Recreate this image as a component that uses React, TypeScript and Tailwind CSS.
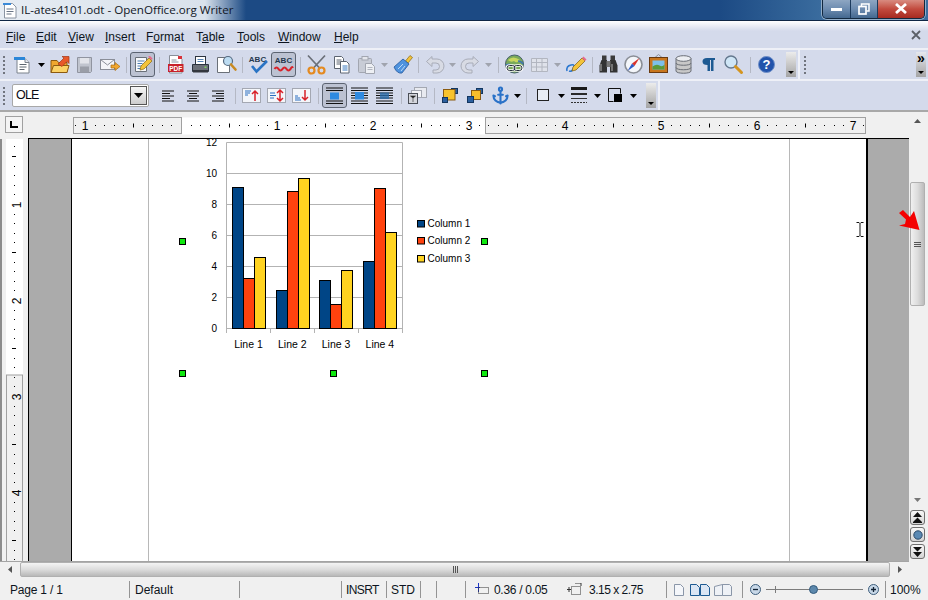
import React from "react";
import { Anchor } from "lucide-react";

const I = ({ children }: { children: React.ReactNode }) => (
  <svg width="25" height="25" viewBox="0 0 25 25" className="shrink-0 block">{children}</svg>
);
const Arrow = ({ w, dim }: { w: string; dim?: boolean }) => (
  <div className={`${w} flex justify-center shrink-0`}>
    <svg width="7" height="4" viewBox="0 0 7 4"><path d="M0 0h7L3.500 4z" fill={dim ? "#a0a4ae" : "#000"} /></svg>
  </div>
);
const Sep = ({ w }: { w: string }) => (
  <div className={`${w} flex justify-center shrink-0`}><div className="w-px h-[16px] bg-[#b4b8c4]" /></div>
);
const Pressed = ({ children }: { children: React.ReactNode }) => (
  <div className="w-[25px] h-[25px] shrink-0 rounded-[3px] border border-[#5c6472] bg-[#bcc2d2] flex items-center justify-center"><div className="-m-px">{children}</div></div>
);
const Grip = () => (
  <div className="flex flex-col gap-[2px] w-[2px] ml-[4px] shrink-0">
    {[0, 1, 2, 3, 4].map((i) => <div key={i} className="w-[2px] h-[2px] bg-[#70747e]" />)}
  </div>
);
const Overflow = () => (
  <div className="w-[10px] h-[25px] shrink-0 bg-gradient-to-b from-[#ececec] to-[#a4a4a4] flex items-end justify-center pb-[3px]">
    <svg width="6" height="3" viewBox="0 0 6 3"><path d="M0 0h6L3 3z" fill="#000" /></svg>
  </div>
);

const NewDoc = () => <I><path d="M7 6.500h8l4 4v10.500H7z" fill="#fff" stroke="#7b828c" /><path d="M15 6.500v4h4" fill="#e4e8ee" stroke="#7b828c" /><path d="M9.500 12.500h7M9.500 15h7M9.500 17.500h5" stroke="#5d6670" /><rect x="4" y="5" width="11" height="3" fill="#2b86d8" /></I>;
const Open = () => <I><path d="M4 8.500h6l1.500 2H20v10H4z" fill="#f0a72e" stroke="#8c5a10" /><path d="M4 20.500l2.500-7H22l-2 7z" fill="#fbd266" stroke="#8c5a10" /><path d="M11 12l6-6-2-1.500h7v7l-2-2-5 5z" fill="#e8582a" stroke="#a33412" strokeWidth=".7" /></I>;
const Save = () => <I><path d="M5.500 5.500h14v14l-1 1h-13z" fill="#c0c4ce" stroke="#9094a0" /><rect x="8" y="6" width="9" height="5.500" fill="#e2e4ea" /><rect x="8" y="14.500" width="9" height="6" fill="#9a9ea8" /></I>;
const Mail = () => <I><rect x="3.500" y="7.500" width="14" height="10" fill="#f4f5f8" stroke="#8a8e98" /><path d="M3.500 7.500l7 5.500 7-5.500" fill="none" stroke="#8a8e98" /><path d="M14 13h4v-2.500l5 4-5 4V16h-4z" fill="#f2a72e" stroke="#a86c10" strokeWidth=".7" /></I>;
const Edit = () => <I><path d="M5.500 5.500h11v14h-11z" fill="#f8f9fb" stroke="#6a7078" /><path d="M7.500 9h7M7.500 11.500h5M7.500 14h4M7.500 16.500h4" stroke="#4c7cb0" /><path d="M10 18l1-4 8-8 3 3-8 8z" fill="#f3c33b" stroke="#8c6a10" strokeWidth=".7" /><path d="M18 4.500l3.500 3.500 1-1.500-2.500-2.500z" fill="#e8688a" /></I>;
const Pdf = () => <I><path d="M6.500 3.500h9l3.500 3.500v14H6.500z" fill="#fff" stroke="#888e98" /><path d="M8.500 8h5M8.500 10h7" stroke="#8a94a0" /><rect x="15" y="4" width="4" height="3" fill="#d8333a" /><rect x="5" y="12" width="15.500" height="8" fill="#c8222a" /><text x="12.700" y="18.700" textAnchor="middle" fontSize="6.500" fontWeight="700" fill="#fff" fontFamily="Liberation Sans">PDF</text></I>;
const Print = () => <I><rect x="7.500" y="4.500" width="10" height="8" fill="#fff" stroke="#2c3440" /><path d="M9.500 7.500h6M9.500 9.500h6" stroke="#5684b4" /><path d="M4.500 12.500h16v7h-16z" fill="#6c7078" stroke="#2c3440" /><rect x="5" y="18" width="15" height="2.500" fill="#33373e" /><rect x="16.500" y="14.500" width="2" height="1.500" fill="#7fd060" /></I>;
const Preview = () => <I><path d="M4.500 5.500h9l3 3v12h-12z" fill="#fff" stroke="#6a7078" /><circle cx="15" cy="9" r="4.500" fill="#bcdcf2" stroke="#566a80" strokeWidth="1.200" /><path d="M18 12.500l4.500 5" stroke="#c88a20" strokeWidth="2.600" strokeLinecap="round" /></I>;
const Spell = () => <I><text x="11.500" y="10" textAnchor="middle" fontSize="8" fontWeight="700" fill="#26384e" fontFamily="Liberation Sans">ABC</text><path d="M6 14l4.500 5.500L21 9" fill="none" stroke="#2a74c4" strokeWidth="2.600" /></I>;
const AutoSpell = () => <I><text x="12.500" y="11" textAnchor="middle" fontSize="8" fontWeight="700" fill="#26384e" fontFamily="Liberation Sans">ABC</text><path d="M3.500 17q2-3 4 0t4 0 4 0 4 0 2-1" fill="none" stroke="#d8222a" strokeWidth="2.200" /></I>;
const Cut = () => <I><path d="M4 3.500l12 13M21 3.500l-12 13" stroke="#6b7078" strokeWidth="1.700" /><circle cx="7.500" cy="18.500" r="3" fill="none" stroke="#e48a20" strokeWidth="2.200" /><circle cx="17.500" cy="18.500" r="3" fill="none" stroke="#e48a20" strokeWidth="2.200" /></I>;
const Copy = () => <I><path d="M5.500 4.500h7l2 2v10h-9z" fill="#fff" stroke="#5c6470" /><path d="M7.500 8h5M7.500 10h5M7.500 12h5" stroke="#5c6470" /><path d="M11.500 9.500h6l2.500 2.500v9h-8.500z" fill="#fff" stroke="#5c6470" /><path d="M13.500 14h5M13.500 16h5M13.500 18h5" stroke="#3b7ac0" /></I>;
const Paste = () => <I><rect x="4.500" y="6.500" width="13" height="14" rx="1" fill="#c8ccd6" stroke="#a2a6b0" /><rect x="8" y="4.500" width="6" height="3.500" fill="#e4e6ec" stroke="#a2a6b0" /><path d="M11.500 11.500h6l3 3v7h-9z" fill="#eef0f4" stroke="#a2a6b0" /><path d="M13.500 15.500h5M13.500 17.500h5" stroke="#b2b6c0" /></I>;
const Brush = () => <I><path d="M15.500 9l4.500-5.500 2.500 2L18 11z" fill="#f2c33b" stroke="#8c6a10" strokeWidth=".7" /><path d="M4 15l9-8 6 5-7 9q-5 1-8-6z" fill="#4f93de" stroke="#24589c" strokeWidth=".8" /><path d="M8 17l5-5M11 19l4-5" stroke="#bcd9f6" /></I>;
const Undo = () => <I><path d="M10 4.500L4.500 9.500l5.500 5v-3.500h4a3.500 3.500 0 0 1 0 7h-3V21h4a6 6 0 0 0 0-14H10z" fill="#d8dbe4" stroke="#a8acb8" /></I>;
const Redo = () => <I><g transform="translate(25 0) scale(-1 1)"><path d="M10 4.500L4.500 9.500l5.500 5v-3.500h4a3.500 3.500 0 0 1 0 7h-3V21h4a6 6 0 0 0 0-14H10z" fill="#d8dbe4" stroke="#a8acb8" /></g></I>;
const Globe = () => <I><circle cx="12.500" cy="12" r="9" fill="#7aa95a" stroke="#46606a" /><path d="M6 8q5-5 12 0-3 4-6 1-3 2-6-1z" fill="#c8d65e" /><path d="M4 13q4-2 5 1M16 9q3 0 5 3" stroke="#3f78b0" fill="none" strokeWidth="1.500" /><rect x="5" y="13.500" width="8" height="5" rx="2.500" fill="none" stroke="#fff" strokeWidth="2.600" /><rect x="12" y="13.500" width="8" height="5" rx="2.500" fill="none" stroke="#fff" strokeWidth="2.600" /><rect x="5" y="13.500" width="8" height="5" rx="2.500" fill="none" stroke="#26303c" strokeWidth="1" /><rect x="12" y="13.500" width="8" height="5" rx="2.500" fill="none" stroke="#26303c" strokeWidth="1" /></I>;
const TableI = () => <I><path d="M4.500 6.500h16v13h-16zM4.500 10.500h16M4.500 15h16M9.500 6.500v13M15 6.500v13" fill="#dfe2ea" stroke="#b2b6c0" /></I>;
const DrawI = () => <I><path d="M4 19q-1-5 4-6t2 4q-1 3-4 2" fill="none" stroke="#2c78d0" strokeWidth="1.500" /><path d="M9 19l1-4 9-9 3 3-9 9z" fill="#f3c33b" stroke="#7c5c10" strokeWidth=".7" /><path d="M19 6l3 3 1.500-1.500-3-3z" fill="#e66a8a" /></I>;
const Binoc = () => <I><rect x="6" y="3.500" width="4.500" height="5" fill="#3c3c3c" /><rect x="14.500" y="3.500" width="4.500" height="5" fill="#3c3c3c" /><path d="M5.500 8h5.500v12.500H3.500v-7z" fill="#333" /><path d="M19.500 8H14v12.500h7.500v-7z" fill="#333" /><rect x="10.500" y="9" width="4" height="6" fill="#777" /><path d="M5 12v7M16 12v7" stroke="#8a8a8a" strokeWidth="1.500" /></I>;
const Compass = () => <I><circle cx="12.500" cy="12.500" r="8.500" fill="#f4f6fa" stroke="#8a8e96" strokeWidth="1.600" /><path d="M18.500 6l-5 8-2.500-2.500z" fill="#d8332c" /><path d="M6.500 19l4.500-7.500 2.500 2.500z" fill="#2c5cc8" /></I>;
const Gallery = () => <I><path d="M9 5.500l3.500-3 3.500 3" fill="none" stroke="#8a8e96" /><rect x="3.500" y="5.500" width="18" height="15" fill="#c8761e" stroke="#6a3a10" /><rect x="6.500" y="8.500" width="12" height="9" fill="#7cc0ea" /><path d="M6.500 17.500v-3q4-3 7-1t5-1v5z" fill="#5a9a3a" /></I>;
const Db = () => <I><path d="M5 6.500v12.500c0 3 15 3 15 0V6.500z" fill="#c8c8c8" stroke="#6a6e76" /><ellipse cx="12.500" cy="6.500" rx="7.500" ry="2.800" fill="#eceef2" stroke="#6a6e76" /><path d="M5 11c0 3 15 3 15 0M5 15.500c0 3 15 3 15 0" fill="none" stroke="#6a6e76" /></I>;
const Pilcrow = () => <I><path d="M11 6h8v2h-1.500v11h-2.500V8h-1v11h-2.500v-6q-5 0-5-3.500T11 6z" fill="#1d5a92" /></I>;
const Zoom = () => <I><circle cx="10" cy="10" r="6" fill="#cfe6f6" stroke="#64788e" strokeWidth="1.400" /><path d="M14.500 14.500l6 6" stroke="#d4951f" strokeWidth="3" strokeLinecap="round" /></I>;
const Help = () => <I><circle cx="12.500" cy="12.500" r="8" fill="#2153ab" stroke="#6f8fc8" /><text x="12.500" y="17" textAnchor="middle" fontSize="13" fontWeight="700" fill="#fff" fontFamily="Liberation Sans">?</text></I>;

const Lines = ({ rows }: { rows: [number, number][] }) => <I>{rows.map(([x, w], i) => <rect key={i} x={x} y={7.5 + i * 2.5} width={w} height="1" fill="#111" />)}</I>;
const FrameArrow = ({ kind }: { kind: number }) => (
  <I>
    <rect x="3.500" y="5.500" width="18" height="14" fill="#f4f6fa" stroke="#a4a8b2" />
    {kind === 0 && <><path d="M6 8h6M6 10h5M6 12h3" stroke="#2a6ec0" /><path d="M16 18V8m-3 3l3-3 3 3" fill="none" stroke="#d8222a" strokeWidth="1.500" /></>}
    {kind === 1 && <><path d="M6 10h5M6 12.500h6M6 15h4" stroke="#2a6ec0" /><path d="M16 7v11m-3-3l3 3 3-3m-6-5l3-3 3 3" fill="none" stroke="#d8222a" strokeWidth="1.500" /></>}
    {kind === 2 && <><path d="M6 13h3M6 15h5M6 17h6" stroke="#2a6ec0" /><path d="M16 7v10m-3-3l3 3 3-3" fill="none" stroke="#d8222a" strokeWidth="1.500" /></>}
  </I>
);
const WrapA = () => <I><path d="M4 5h17M4 7.500h17M4 18h17M4 20.500h17" stroke="#111" /><rect x="8" y="9.500" width="9" height="7" fill="#2f8ae0" /></I>;
const WrapB = () => <I><path d="M4 5h17M4 7.500h17M4 10h4M17 10h4M4 12.500h4M17 12.500h4M4 15h4M17 15h4M4 18h17M4 20.500h17" stroke="#111" /><rect x="8" y="9" width="9" height="7.500" fill="#2f8ae0" /></I>;
const WrapC = () => <I><path d="M4 5h17M4 7.500h17M4 10h17M4 12.500h17M4 15h17M4 18h17M4 20.500h17" stroke="#111" /><rect x="8" y="9.500" width="9" height="6.500" fill="#2b6ca8" opacity=".8" /></I>;
const Frame = () => <I><rect x="9.500" y="4.500" width="12" height="10" fill="#e8eaf0" stroke="#a4a8b2" /><rect x="6.500" y="7.500" width="10" height="7" fill="#f4f5f8" stroke="#a4a8b2" /><rect x="3.500" y="10.500" width="9" height="10" fill="#d4d6dc" stroke="#4a4e56" /><path d="M5.500 13h5l-2.500 2zM8 15v4" fill="#222" stroke="#222" strokeWidth=".6" /></I>;
const Arrange = ({ flip }: { flip?: boolean }) => (
  <I>
    {flip ? (
      <><rect x="13.500" y="5.500" width="6" height="5" fill="#2b5f9e" stroke="#13365f" /><rect x="8.500" y="7.500" width="9" height="9" fill="#f6bd2c" stroke="#8a5a10" /><rect x="4.500" y="13.500" width="6" height="6" fill="#2b5f9e" stroke="#13365f" /></>
    ) : (
      <><rect x="13.500" y="5.500" width="6" height="5" fill="#2b5f9e" stroke="#13365f" /><rect x="5.500" y="6.500" width="11.500" height="10.500" fill="#f8c32c" stroke="#8a5a10" /><rect x="4.500" y="14.500" width="5" height="5" fill="#2b5f9e" stroke="#13365f" /></>
    )}
  </I>
);
const BorderI = () => <I><rect x="6.500" y="6.500" width="11" height="11" fill="#e8edf5" stroke="#222" /></I>;
const LineI = () => <I><rect x="4" y="4" width="16" height="3" fill="#1a1a1a" /><rect x="4" y="10" width="16" height="2" fill="#2a2a2a" /><rect x="4" y="15" width="16" height="1" fill="#333" /><path d="M4 19.500h16" stroke="#333" strokeDasharray="2 1" /></I>;
const ShadowI = () => <I><path d="M5.500 18.500V5.500h12v5" fill="none" stroke="#111" /><path d="M5.500 18.500h5" stroke="#111" /><rect x="11" y="11" width="8" height="8" fill="#000" /></I>;

const Cols = [
  { color: "#004586", data: [187, 290, 280, 261] },
  { color: "#ff420e", data: [278, 191, 304, 188] },
  { color: "#ffd320", data: [257, 178, 270, 232] },
];
const groupX = [232.5, 276.5, 319.5, 363.5];

const Chart = () => (
  <svg width="370" height="261" viewBox="140 139 370 261" className="absolute left-[68px] top-0 block">
    <g fontFamily="Liberation Sans" fontSize="10" fill="#000">
      {[142.5, 173.5, 204.5, 235.5, 266.5, 297.5, 328.5].map((y) => <path key={y} d={`M226.500 ${y}H402.500`} stroke="#b3b3b3" />)}
      <path d="M226.500 142.500V333M402.500 142.500V333M270.500 328.500V333M314.500 328.500V333M358.500 328.500V333" stroke="#b3b3b3" fill="none" />
      {Cols.map((c, ci) => c.data.map((top, g) => <rect key={`${ci}${g}`} x={groupX[g] + ci * 11} y={top + 0.5} width="11" height={328 - top} fill={c.color} stroke="#000" strokeWidth="1" />))}
      {["12", "10", "8", "6", "4", "2", "0"].map((t, i) => <text key={t} x="217" y={146 + i * 31} textAnchor="end">{t}</text>)}
      {["Line 1", "Line 2", "Line 3", "Line 4"].map((t, i) => <text key={t} x={248.5 + i * 43.8} y="348" textAnchor="middle" fontSize="10.500">{t}</text>)}
      {Cols.map((c, i) => <rect key={i} x="417.500" y={[220.5, 237.5, 255.5][i]} width="7" height="6.500" fill={c.color} stroke="#000" />)}
      {["Column 1", "Column 2", "Column 3"].map((t, i) => <text key={t} x="427.500" y={[227, 244, 262][i]}>{t}</text>)}
      {[[182.5, 241.5], [484.5, 241.5], [182.5, 373.5], [333.5, 373.5], [484.5, 373.5]].map(([x, y]) => <rect key={`${x}${y}`} x={x - 3} y={y - 3} width="6" height="6" fill="#0fe80f" stroke="#000" />)}
    </g>
  </svg>
);

const ticks = (from: number, to: number) => {
  const out: number[] = [];
  for (let i = Math.ceil((from - 181) / 9.6); 181 + i * 9.6 < to; i++) out.push(i);
  return out;
};

const HRuler = () => (
  <svg width="793" height="18" viewBox="73 0 793 18" className="block shrink-0">
    <rect x="182" y="0.500" width="303" height="17" fill="#fff" />
    <rect x="73.500" y="0.500" width="108" height="16" fill="#f0f0f0" stroke="#a0a0a0" />
    <rect x="485.500" y="0.500" width="380" height="16" fill="#f0f0f0" stroke="#a0a0a0" />
    {ticks(75, 865).map((i) => {
      const x = Math.round(181 + i * 9.6);
      if (i % 10 === 0) return null;
      return i % 5 === 0 ? <rect key={i} x={x} y="6.500" width="1" height="4" fill="#000" /> : <rect key={i} x={x} y="8" width="1" height="1" fill="#000" />;
    })}
    <g fontFamily="Liberation Sans" fontSize="12" textAnchor="middle" fill="#000">
      {[[85, "1"], [277, "1"], [373, "2"], [469, "3"], [565, "4"], [661, "5"], [757, "6"], [853, "7"]].map(([x, t]) => <text key={x as number} x={x as number} y="13">{t as string}</text>)}
    </g>
  </svg>
);

const VRuler = () => (
  <div className="w-[28px] shrink-0 bg-[#f0f0f0] pl-[6px] border-l-2 border-[#8c8c8c] -ml-0">
    <svg width="18" height="422" viewBox="0 139 18 422" className="block -ml-[2px]">
      <rect x="0" y="139" width="17" height="236" fill="#fff" />
      <rect x="0.500" y="375" width="16" height="190" fill="#f0f0f0" stroke="#a0a0a0" />
      {Array.from({ length: 46 }, (_, k) => k).map((k) => {
        const y = Math.round(108 + (k + 4) * 9.6);
        const i = k + 4;
        if (i % 10 === 0) return null;
        return i % 5 === 0 ? <rect key={k} x="6" y={y} width="4" height="1" fill="#000" /> : <rect key={k} x="8" y={y} width="1" height="1" fill="#000" />;
      })}
      <g fontFamily="Liberation Sans" fontSize="12" textAnchor="middle" fill="#000">
        {[[205, "1"], [301, "2"], [397, "3"], [493, "4"]].map(([y, t]) => <text key={y as number} transform={`translate(14.500 ${y}) rotate(-90)`}>{t as string}</text>)}
      </g>
    </svg>
  </div>
);

const Seg = ({ w, children }: { w: string; children?: React.ReactNode }) => (
  <div className={`${w} h-[17px] shrink-0 border-r border-[#949494] flex items-center`}>{children}</div>
);

const NavBtn = ({ children }: { children: React.ReactNode }) => (
  <div className="w-[15px] h-[15px] rounded-[3px] border border-[#707070] bg-gradient-to-b from-[#f8f8f8] to-[#d4d4d4] flex items-center justify-center">{children}</div>
);

export default function App() {
  return (
    <div className="w-[928px] h-[600px] overflow-hidden relative flex flex-col bg-[#f0f0f0] text-[12px] text-black font-['Liberation_Sans',Arial,sans-serif]">
      {/* title bar */}
      <div className="h-[20px] shrink-0 flex items-center bg-[linear-gradient(90deg,#e6ecf3_0,#d9e2ec_205px,#1c4a84_246px,#1c4a84_720px,#3a6c9e_822px)]">
        <svg width="14" height="17" viewBox="0 0 14 17" className="ml-[3px] shrink-0">
          <path d="M1.500 1.500h8l3.500 3.500v11h-11.500z" fill="#fff" stroke="#8a94a2" />
          <path d="M3.500 7h7M3.500 9.500h7M3.500 12h5" stroke="#6a7686" />
          <rect x="0" y="1" width="8" height="2" fill="#3b8ad8" />
        </svg>
        <span className="ml-[4px] text-[11.6px] leading-none font-['Open_Sans',sans-serif] text-[#10161f]">IL-ates4101.odt - OpenOffice.org Writer</span>
        <div className="ml-auto mr-[3px] -mt-[2px] h-[19px] w-[103px] flex rounded-b-[5px] border border-t-0 border-[#12283f] shadow-[0_0_0_1px_rgba(255,255,255,0.45)] overflow-hidden">
          <div className="w-[28px] border-r border-[#1c3a5c] bg-gradient-to-b from-[#8ea6c2] via-[#6d8cb0] to-[#44688f] flex items-center justify-center">
            <div className="w-[11px] h-[3px] bg-white mt-[2px]" />
          </div>
          <div className="w-[27px] border-r border-[#1c3a5c] bg-gradient-to-b from-[#8ea6c2] via-[#6d8cb0] to-[#44688f] flex items-center justify-center">
            <svg width="12" height="12" viewBox="0 0 12 12"><path d="M3.500 3V1h7.500v7H8.500" fill="none" stroke="#fff" strokeWidth="1.500" /><rect x="1" y="3.500" width="7" height="7.500" fill="none" stroke="#fff" strokeWidth="1.700" /></svg>
          </div>
          <div className="flex-1 bg-gradient-to-b from-[#d88b80] via-[#c24a3e] to-[#a62a20] flex items-center justify-center">
            <svg width="14" height="11" viewBox="0 0 14 11"><path d="M2 1l10 9M12 1L2 10" stroke="#fff" strokeWidth="2.800" /></svg>
          </div>
        </div>
      </div>
      <div className="h-px shrink-0 bg-[#0f2745]" />
      {/* menu */}
      <div className="h-[27px] shrink-0 relative flex items-center pl-[6px] pt-[5px] bg-[linear-gradient(180deg,#ffffff_0,#d4daeb_10px)] text-[#0c1420]">
        <span className="w-[30px]"><u>F</u>ile</span>
        <span className="w-[32px]"><u>E</u>dit</span>
        <span className="w-[37px]"><u>V</u>iew</span>
        <span className="w-[41px]"><u>I</u>nsert</span>
        <span className="w-[50px]">F<u>o</u>rmat</span>
        <span className="w-[41px]">T<u>a</u>ble</span>
        <span className="w-[41px]"><u>T</u>ools</span>
        <span className="w-[56px]"><u>W</u>indow</span>
        <span><u>H</u>elp</span>
        <svg width="10" height="10" viewBox="0 0 10 10" className="absolute right-[7px] top-[9px]"><path d="M1 1l8 8M9 1L1 9" stroke="#5c6068" strokeWidth="1.800" /></svg>
      </div>
      {/* standard toolbar */}
      <div className="shrink-0 border-t-2 border-[#eef0f7] h-[31px] flex items-center bg-[#d4daeb]">
        <div className="w-[10px] shrink-0 -ml-px flex"><Grip /></div>
        <div className="w-px shrink-0" />
        <NewDoc /><Arrow w="w-[12px]" /><Open /><Save /><Mail /><Sep w="w-[8px]" />
        <Pressed><Edit /></Pressed><Sep w="w-[8px]" /><Pdf /><Print /><Preview /><Sep w="w-[8px]" />
        <Spell /><Pressed><AutoSpell /></Pressed><Sep w="w-[8px]" />
        <Cut /><Copy /><Paste /><Arrow w="w-[11px]" dim /><Brush /><Sep w="w-[7px]" />
        <Undo /><Arrow w="w-[11px]" dim /><Redo /><Arrow w="w-[11px]" dim /><Sep w="w-[8px]" />
        <Globe /><TableI /><Arrow w="w-[11px]" dim /><DrawI /><Sep w="w-[8px]" />
        <Binoc /><Compass /><Gallery /><Db /><Pilcrow /><Zoom /><Sep w="w-[8px]" /><Help />
        <div className="w-[7px] shrink-0" /><Overflow />
        <div className="w-[2px] self-stretch ml-[2px] bg-[#eef0f7] shrink-0" />
        <Grip />
        <div className="ml-auto mr-[2px] w-[10px] h-[25px] flex flex-col items-center justify-between pb-[3px] bg-gradient-to-b from-[#e6e8ee] to-[#a4a4a4]">
          <span className="text-[14px] leading-[12px] font-bold">»</span>
          <svg width="6" height="3" viewBox="0 0 6 3"><path d="M0 0h6L3 3z" fill="#000" /></svg>
        </div>
      </div>
      {/* formatting toolbar */}
      <div className="shrink-0 border-t-2 border-[#eef0f7] h-[31px] flex items-center bg-[#d4daeb]">
        <div className="w-[12px] shrink-0 -ml-px flex"><Grip /></div>
        <div className="w-[137px] h-[23px] ml-px shrink-0 bg-white border border-[#a8a8a8] rounded-[2px] flex items-center pl-[3px] pr-[1px] text-[#0a0a14]">
          <span className="text-[12.5px] tracking-[-0.8px]">OLE</span>
          <div className="ml-auto w-[17px] h-[19px] border border-[#555] bg-gradient-to-b from-[#f6f6f6] to-[#cdcdcd] flex items-center justify-center">
            <svg width="9" height="5" viewBox="0 0 9 5"><path d="M0 0h9L4.500 5z" fill="#000" /></svg>
          </div>
        </div>
        <div className="w-[7px] shrink-0" />
        <Lines rows={[[6, 12], [6, 8], [6, 12], [6, 8], [6, 12]]} />
        <Lines rows={[[6, 12], [8, 8], [6, 12], [8, 8], [6, 12]]} />
        <Lines rows={[[6, 12], [10, 8], [6, 12], [10, 8], [6, 12]]} />
        <Sep w="w-[8px]" />
        <FrameArrow kind={0} /><FrameArrow kind={1} /><FrameArrow kind={2} /><Sep w="w-[8px]" />
        <Pressed><WrapA /></Pressed><WrapB /><WrapC /><Sep w="w-[8px]" /><Frame /><Sep w="w-[8px]" />
        <Arrange /><Arrange flip />
        <div className="w-[25px] flex justify-center shrink-0"><Anchor size={19} strokeWidth={2.6} color="#2a72c8" /></div>
        <Arrow w="w-[9px]" /><Sep w="w-[9px]" /><BorderI /><Arrow w="w-[11px]" /><LineI /><Arrow w="w-[11px]" /><ShadowI /><Arrow w="w-[11px]" />
        <div className="w-[7px] shrink-0" /><Overflow />
        <div className="w-[2px] self-stretch ml-[2px] bg-[#eef0f7] shrink-0" />
      </div>
      <div className="h-[2px] shrink-0 bg-[#a8a8a8]" />
      {/* main */}
      <div className="h-[465px] shrink-0 flex">
        <div className="w-[909px] shrink-0 flex flex-col">
          <div className="h-[26px] shrink-0 flex items-start pt-[5px] pl-[5px]">
            <div className="w-[18px] h-[17px] -mt-px shrink-0 border border-[#a0a0a0] bg-[#f4f4f4] flex items-center justify-center">
              <svg width="8" height="7" viewBox="0 0 8 7"><path d="M1 0v6h7" fill="none" stroke="#000" strokeWidth="2" /></svg>
            </div>
            <div className="w-[50px] shrink-0" />
            <HRuler />
          </div>
          <div className="h-[423px] shrink-0 flex">
            <div className="flex flex-col w-[28px] shrink-0">
              <div className="h-px bg-[#f0f0f0]" />
              <VRuler />
            </div>
            <div className="flex-1 flex border-t border-black border-l">
              <div className="w-[42px] shrink-0 bg-[#ababab]" />
              <div className="w-[795px] shrink-0 border-l border-black bg-white relative pl-[76px] overflow-hidden">
                <div className="w-[642px] h-full border-x border-[#b8b8b8]" />
                <Chart />
                <svg width="8" height="15" viewBox="0 0 8 15" className="absolute left-[784px] top-[83px]"><path d="M0.500 0.500h2.500l1 1 1-1h2.500M4 1.500v12M0.500 14.500h2.500l1-1 1 1h2.500" fill="none" stroke="#111" /></svg>
              </div>
              <div className="w-[3px] shrink-0 bg-black -ml-px" />
              <div className="flex-1 bg-[#ababab]" />
            </div>
          </div>
          <div className="h-[16px] shrink-0 flex items-center border-t border-[#a4a4a4]">
            <div className="w-[20px] flex justify-center shrink-0"><svg width="4" height="7" viewBox="0 0 4 7"><path d="M4 0v7L0 3.500z" fill="#555" /></svg></div>
            <div className="w-[870px] h-[15px] shrink-0 rounded-[2px] border border-[#b0b0b0] bg-gradient-to-b from-[#f4f4f4] via-[#dcdcdc] to-[#b8b8b8] flex items-center justify-center">
              <div className="flex gap-[1px]"><div className="w-px h-[7px] bg-[#555]" /><div className="w-px h-[7px] bg-[#555]" /><div className="w-px h-[7px] bg-[#555]" /></div>
            </div>
            <div className="w-[19px] flex justify-center shrink-0"><svg width="4" height="7" viewBox="0 0 4 7"><path d="M0 0v7L4 3.500z" fill="#555" /></svg></div>
          </div>
        </div>
        {/* vertical scrollbar */}
        <div className="w-[19px] shrink-0 flex flex-col pl-px">
          <div className="h-[70px] shrink-0 pt-[7px] pl-[4px]"><svg width="7" height="4" viewBox="0 0 7 4"><path d="M0 4h7L3.500 0z" fill="#555" /></svg></div>
          <div className="w-[15px] h-[124px] shrink-0 rounded-[2px] border border-[#b0b0b0] bg-gradient-to-r from-[#f0f0f0] via-[#dcdcdc] to-[#bcbcbc] flex flex-col gap-[1px] items-center justify-center">
            <div className="w-[7px] h-px bg-[#555]" /><div className="w-[7px] h-px bg-[#555]" /><div className="w-[7px] h-px bg-[#555]" />
          </div>
          <div className="h-[199px] shrink-0 flex items-end pl-[4px] pb-[3px]"><svg width="7" height="4" viewBox="0 0 7 4"><path d="M0 0h7L3.500 4z" fill="#777" /></svg></div>
          <div className="flex flex-col gap-[2px] pt-[5px]">
            <NavBtn><svg width="11" height="11" viewBox="0 0 11 11"><path d="M1 5h9L5.500 0zM1 10h9L5.500 5.500z" fill="#111" /><path d="M1 10.500h9" stroke="#111" /></svg></NavBtn>
            <NavBtn><svg width="10" height="10" viewBox="0 0 10 10"><circle cx="5" cy="5" r="4.200" fill="#5b8ab4" stroke="#2c4a68" /></svg></NavBtn>
            <NavBtn><svg width="11" height="11" viewBox="0 0 11 11"><path d="M1 1h9L5.500 5.500zM1 6h9l-4.500 5z" fill="#111" /></svg></NavBtn>
          </div>
        </div>
      </div>
      {/* status bar */}
      <div className="h-[23px] shrink-0 flex items-center pt-[2px] text-[#0c1420]">
        <Seg w="w-[130px]"><span className="pl-[10px] tracking-[-0.2px]">Page 1 / 1</span></Seg>
        <Seg w="w-[110px]"><span className="pl-[5px]">Default</span></Seg>
        <Seg w="w-[102px]" />
        <Seg w="w-[45px]"><span className="pl-[4px] tracking-[-0.6px]">INSRT</span></Seg>
        <Seg w="w-[34px]"><span className="pl-[4px]">STD</span></Seg>
        <Seg w="w-[16px]" />
        <Seg w="w-[29px]" />
        <div className="w-[102px] h-[17px] shrink-0 flex items-center pl-[9px]">
          <svg width="14" height="13" viewBox="0 0 14 13"><path d="M0 4.500h5M3.500 0v9" stroke="#1c34c8" /><rect x="3.500" y="4.500" width="10" height="6" fill="none" stroke="#333" strokeDasharray="1 1" /></svg>
          <span className="ml-[5px] tracking-[-0.3px]">0.36 / 0.05</span>
        </div>
        <Seg w="w-[99px]">
          <svg width="15" height="13" viewBox="0 0 15 13" className="ml-[-1px]"><path d="M2 4v5M0 6.500h4M8 0h6v3" stroke="#333" fill="none" /><rect x="4.500" y="3.500" width="9" height="8" fill="none" stroke="#333" strokeDasharray="1 1" /></svg>
          <span className="ml-[7px] tracking-[-0.5px]">3.15 x 2.75</span>
        </Seg>
        <Seg w="w-[76px]">
          <svg width="62" height="12" viewBox="0 0 62 12" className="ml-[7px]">
            <path d="M.5.500h6l3 3V11.500H.5z" fill="#f4f6fa" stroke="#8a96a8" />
            <path d="M16.500.500h6l3 3V11.500h-9z" fill="#dbe6f4" stroke="#1d5a92" />
            <path d="M26.500.500h6l3 3V11.500h-9z" fill="#dbe6f4" stroke="#1d5a92" />
            <path d="M40.500 2.500l8-2v11l-8 .0zM48.500.5h7l2 2v9h-9z" fill="#eef1f6" stroke="#8a96a8" />
          </svg>
        </Seg>
        <Seg w="w-[143px]">
          <div className="flex items-center pl-[7px]">
            <svg width="11" height="11" viewBox="0 0 11 11" className="shrink-0"><circle cx="5.500" cy="5.500" r="5" fill="#c8d8e8" stroke="#3e5e7c" /><path d="M3 5.500h5" stroke="#123" strokeWidth="1.300" /></svg>
            <div className="relative w-[97px] h-[11px] ml-[5px] shrink-0">
              <div className="absolute left-0 right-0 top-[5px] h-px bg-[#7c7c7c]" />
              <div className="absolute left-[9px] top-[2px] w-px h-[7px] bg-[#7c7c7c]" />
              <div className="absolute left-[43px] top-[1px] w-[9px] h-[9px] rounded-full bg-[#5c88ac] border border-[#335a7c]" />
            </div>
            <svg width="11" height="11" viewBox="0 0 11 11" className="ml-[5px] shrink-0"><circle cx="5.500" cy="5.500" r="5" fill="#c8d8e8" stroke="#3e5e7c" /><path d="M3 5.500h5M5.500 3v5" stroke="#123" strokeWidth="1.300" /></svg>
          </div>
        </Seg>
        <span className="pl-[4px]">100%</span>
      </div>
      {/* pointer */}
      <svg width="24" height="22" viewBox="898 209 24 22" className="absolute left-[898px] top-[209px]">
        <path d="M899 213l4-3 7 7 4-6 5.500 19-20.500-4.500 6-1.500 1-4.500z" fill="#f40000" />
      </svg>
    </div>
  );
}
